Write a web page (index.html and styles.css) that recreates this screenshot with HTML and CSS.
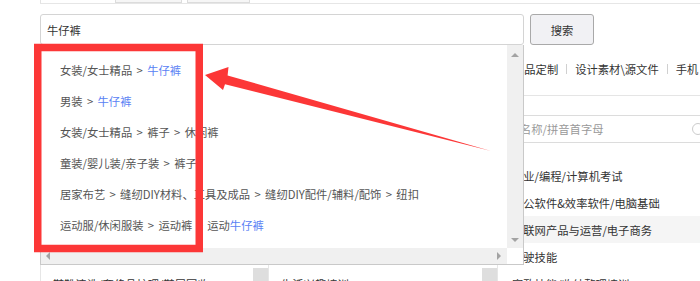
FILE: index.html
```html
<!DOCTYPE html>
<html lang="zh-CN">
<head>
    <meta charset="UTF-8">
    <meta name="viewport" content="width=device-width, initial-scale=1.0">
    <title>类目搜索</title>
    <link rel="stylesheet" href="styles.css">
</head>
<body>
    <div class="tabs">
        <div class="tab"></div>
        <div class="tab tab-2"></div>
    </div>

    <div class="search-row">
        <div class="search-box">
            <input class="search-input" type="text" value="牛仔裤">
            <div class="suggest">
                <ul class="suggest-list">
                    <li>女装/女士精品 &gt; <em>牛仔裤</em></li>
                    <li>男装 &gt; <em>牛仔裤</em></li>
                    <li>女装/女士精品 &gt; 裤子 &gt; 休闲裤</li>
                    <li>童装/婴儿装/亲子装 &gt; 裤子</li>
                    <li>居家布艺 &gt; 缝纫DIY材料、工具及成品 &gt; 缝纫DIY配件/辅料/配饰 &gt; 纽扣</li>
                    <li>运动服/休闲服装 &gt; 运动裤 &gt; 运动<em>牛仔裤</em></li>
                </ul>
                <div class="vscroll"><span class="arr up"></span><span class="arr down"></span></div>
                <div class="hscroll"><span class="arr left"></span><span class="arr right"></span></div>
                <div class="corner"></div>
            </div>
        </div>
        <button class="search-btn">搜索</button>
    </div>

    <div class="cat-nav">
        <span>礼品定制</span><i class="sep"></i><span>设计素材\源文件</span><i class="sep"></i><span>手机</span>
    </div>

    <div class="picker">
        <div class="col">
            <div class="filter"><input placeholder="名称/拼音首字母"><i class="lens"></i></div>
            <div class="list-wrap">
                <ul class="cat-list">
                    <li><span>女装/女士精品</span><i>&gt;</i></li>
                    <li><span>男装</span><i>&gt;</i></li>
                    <li><span>教育培训</span><i>&gt;</i></li>
                    <li><span>家居日用</span><i>&gt;</i></li>
                    <li><span>鞋靴清洗/奢侈品护理/鞋履回收</span><i>&gt;</i></li>
                </ul>
                <div class="bar"><div class="thumb"></div></div>
            </div>
        </div>
        <div class="col">
            <div class="filter"><input placeholder="名称/拼音首字母"><i class="lens"></i></div>
            <div class="list-wrap">
                <ul class="cat-list">
                    <li><span>职业技能培训</span><i>&gt;</i></li>
                    <li><span>学历教育</span><i>&gt;</i></li>
                    <li><span>语言培训</span><i>&gt;</i></li>
                    <li><span>艺术培训</span><i>&gt;</i></li>
                    <li><span>生活兴趣培训</span><i>&gt;</i></li>
                </ul>
                <div class="bar"><div class="thumb"></div></div>
            </div>
        </div>
        <div class="col">
            <div class="filter"><input placeholder="名称/拼音首字母"><i class="lens"></i></div>
            <ul class="cat-list leaf">
                <li>职业/编程/计算机考试</li>
                <li>办公软件&amp;效率软件/电脑基础</li>
                <li class="hover">互联网产品与运营/电子商务</li>
                <li>驾驶技能</li>
                <li>家政技能/收纳整理培训</li>
            </ul>
        </div>
    </div>

    <!-- 标注：红框 + 箭头 -->
    <svg class="marks" width="700" height="281" viewBox="0 0 700 281">
        <rect x="37.75" y="47.5" width="161.5" height="201" fill="none" stroke="#fc3737" stroke-width="7.5"/>
        <polygon points="205,75 228.5,67 227.6,75.4 491,151 225,84.2 223,90" fill="#fc3737"/>
    </svg>
</body>
</html>
```

FILE: styles.css
```css
* {
    box-sizing: border-box;
}
body {
    margin: 0;
    width: 700px;
    height: 281px;
    overflow: hidden;
    position: relative;
    background: #fff;
    color: #333;
    font-family: "Noto Sans CJK SC", "Microsoft YaHei", sans-serif;
    font-size: 11.3px;
}
ul {
    margin: 0;
    padding: 0;
    list-style: none;
}
.tabs {
    display: flex;
    gap: 5px;
    height: 4px;
    margin-left: 40px;
    padding-left: 74px;
    border-left: 1px solid #e3e3e3;
    border-bottom: 1px solid #e6e6e6;
}
.tab {
    width: 67px;
    height: 3px;
    background: #f6f6f6;
    border: 1px solid #dcdcdc;
    border-top: 0;
}
.tab-2 {
    width: 63px;
}
.search-row {
    display: flex;
    gap: 6px;
    margin: 10px 0 0 40px;
}
.search-box {
    position: relative;
    width: 484px;
}
.search-input {
    display: block;
    width: 100%;
    height: 31px;
    padding: 0 6px;
    border: 1px solid #d4d4d4;
    border-radius: 3px;
    font: inherit;
    color: #333;
    outline: none;
}
.search-btn {
    width: 64px;
    height: 31px;
    background: #f1f1f4;
    border: 1px solid #a9a9a9;
    border-radius: 3px;
    font: inherit;
    color: #333;
}
/* 下拉联想框 */
.suggest {
    position: absolute;
    top: 100%;
    left: 0;
    z-index: 2;
    display: grid;
    grid-template-columns: 1fr 16px;
    grid-template-rows: 1fr 16px;
    width: 484px;
    height: 220px;
    background: #fff;
    border: 1px solid #c9c9c9;
    border-top: 0;
}
.suggest-list {
    padding: 10px 0 0 19px;
    overflow: hidden;
    color: #555;
    word-spacing: 1.8px;
}
.suggest-list li {
    height: 31px;
    line-height: 31px;
    white-space: nowrap;
}
.suggest-list em {
    font-style: normal;
    color: #5a82f4;
}
.vscroll {
    display: flex;
    flex-direction: column;
    justify-content: space-between;
    align-items: center;
    padding: 8px 0 6px;
    background: #f0f0f0;
}
.hscroll {
    display: flex;
    justify-content: space-between;
    align-items: center;
    padding: 0 6px 0 5px;
    background: #f0f0f0;
}
.corner {
    background: #fff;
}
.arr {
    width: 0;
    height: 0;
    border: 4px solid transparent;
}
.arr.up {
    border-top: 0;
    border-bottom-color: #a3a3a3;
}
.arr.down {
    border-bottom: 0;
    border-top-color: #a3a3a3;
}
.arr.left {
    border-left: 0;
    border-right-color: #a3a3a3;
}
.arr.right {
    border-right: 0;
    border-left-color: #a3a3a3;
}
/* 页面底层：类目选择 */
.cat-nav {
    display: flex;
    align-items: center;
    height: 50px;
    padding: 0 0 2px 513px;
    white-space: nowrap;
    overflow: hidden;
}
.sep {
    flex: none;
    width: 1px;
    height: 10px;
    margin: 0 8px;
    background: #d0d0d0;
}
.picker {
    display: grid;
    grid-template-columns: 228px 229px 229px;
    margin-left: 40px;
    border-top: 1px solid #e5e5e5;
}
.col {
    padding-top: 19px;
    border-left: 1px solid #e6e6e6;
}
.filter {
    display: flex;
    align-items: center;
    height: 28px;
    margin: 0 10px 19px;
    padding: 0 11px 0 11px;
    border: 1px solid #dcdcdc;
    border-radius: 3px;
}
.filter input {
    flex: 1;
    min-width: 0;
    border: 0;
    padding: 0;
    font: inherit;
    outline: none;
}
.filter input::placeholder {
    color: #999;
}
.lens {
    flex: none;
    width: 12px;
    height: 12px;
    border: 1px solid #ccc;
    border-radius: 50%;
}
.list-wrap {
    display: flex;
}
.cat-list {
    flex: 1;
}
.cat-list li {
    display: flex;
    justify-content: space-between;
    align-items: center;
    height: 27px;
    padding: 0 16px 0 12px;
    white-space: nowrap;
}
.cat-list i {
    font-style: normal;
    color: #999;
}
.cat-list.leaf li {
    padding-left: 14px;
}
.cat-list .hover {
    background: #f5f5f5;
}
.bar {
    width: 15px;
}
.thumb {
    height: 60px;
    margin-top: 106px;
    background: #dedede;
}
.marks {
    position: absolute;
    top: 0;
    left: 0;
    z-index: 5;
    pointer-events: none;
}
```
